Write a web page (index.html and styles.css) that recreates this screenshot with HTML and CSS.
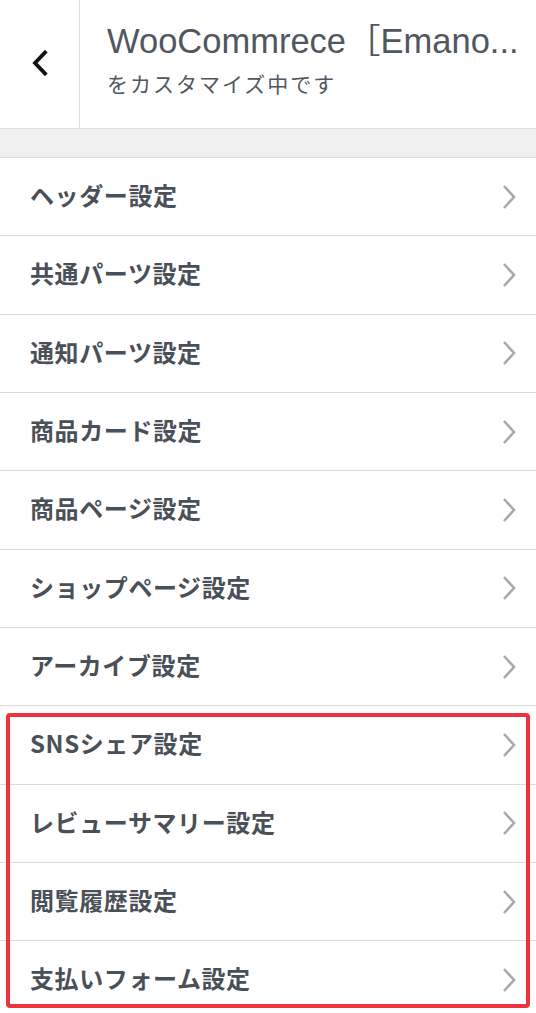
FILE: index.html
```html
<!DOCTYPE html>
<html lang="ja">
<head>
<meta charset="utf-8">
<title>Customizer</title>
<link rel="stylesheet" href="styles.css">
</head>
<body>
<div class="page">
  <header class="head">
    <div class="back">
      <svg width="18" height="26" viewBox="0 0 18 26"><path d="M14 2.5 L4 13 L14 23.5" fill="none" stroke="#111" stroke-width="3.8" stroke-linecap="square"/></svg>
    </div>
    <div class="titles">
      <div class="title">WooCommrece［Emano...</div>
      <div class="sub">をカスタマイズ中です</div>
    </div>
  </header>
  <div class="band"></div>
  <ul class="menu">
    <li class="row"><span>ヘッダー設定</span><svg class="chev" width="16" height="26" viewBox="0 0 16 26"><path d="M3 2 L13 13 L3 24" fill="none" stroke="#a7aaad" stroke-width="2.6"/></svg></li>
    <li class="row"><span>共通パーツ設定</span><svg class="chev" width="16" height="26" viewBox="0 0 16 26"><path d="M3 2 L13 13 L3 24" fill="none" stroke="#a7aaad" stroke-width="2.6"/></svg></li>
    <li class="row"><span>通知パーツ設定</span><svg class="chev" width="16" height="26" viewBox="0 0 16 26"><path d="M3 2 L13 13 L3 24" fill="none" stroke="#a7aaad" stroke-width="2.6"/></svg></li>
    <li class="row"><span>商品カード設定</span><svg class="chev" width="16" height="26" viewBox="0 0 16 26"><path d="M3 2 L13 13 L3 24" fill="none" stroke="#a7aaad" stroke-width="2.6"/></svg></li>
    <li class="row"><span>商品ページ設定</span><svg class="chev" width="16" height="26" viewBox="0 0 16 26"><path d="M3 2 L13 13 L3 24" fill="none" stroke="#a7aaad" stroke-width="2.6"/></svg></li>
    <li class="row"><span>ショップページ設定</span><svg class="chev" width="16" height="26" viewBox="0 0 16 26"><path d="M3 2 L13 13 L3 24" fill="none" stroke="#a7aaad" stroke-width="2.6"/></svg></li>
    <li class="row"><span>アーカイブ設定</span><svg class="chev" width="16" height="26" viewBox="0 0 16 26"><path d="M3 2 L13 13 L3 24" fill="none" stroke="#a7aaad" stroke-width="2.6"/></svg></li>
    <li class="row"><span>SNSシェア設定</span><svg class="chev" width="16" height="26" viewBox="0 0 16 26"><path d="M3 2 L13 13 L3 24" fill="none" stroke="#a7aaad" stroke-width="2.6"/></svg></li>
    <li class="row"><span>レビューサマリー設定</span><svg class="chev" width="16" height="26" viewBox="0 0 16 26"><path d="M3 2 L13 13 L3 24" fill="none" stroke="#a7aaad" stroke-width="2.6"/></svg></li>
    <li class="row"><span>閲覧履歴設定</span><svg class="chev" width="16" height="26" viewBox="0 0 16 26"><path d="M3 2 L13 13 L3 24" fill="none" stroke="#a7aaad" stroke-width="2.6"/></svg></li>
    <li class="row"><span>支払いフォーム設定</span><svg class="chev" width="16" height="26" viewBox="0 0 16 26"><path d="M3 2 L13 13 L3 24" fill="none" stroke="#a7aaad" stroke-width="2.6"/></svg></li>
  </ul>
  <div class="highlight"></div>
</div>
</body>
</html>
```

FILE: styles.css
```css
html, body {
  margin: 0;
  padding: 0;
  background: #ffffff;
}
.page {
  position: relative;
  width: 536px;
  height: 1013px;
  overflow: hidden;
  font-family: "Liberation Sans", "Noto Sans CJK JP", sans-serif;
}
.head {
  display: flex;
  height: 128px;
  border-bottom: 1px solid #dcdcde;
  background: #fff;
}
.back {
  width: 80px;
  flex: none;
  border-right: 1px solid #dcdcde;
  display: flex;
  align-items: center;
  justify-content: center;
  padding-bottom: 2px;
  box-sizing: border-box;
}
.titles {
  flex: 1;
  min-width: 0;
  padding: 21px 16px 0 27px;
  color: #50575e;
}
.title {
  font-size: 34.5px;
  line-height: 40px;
  white-space: nowrap;
  overflow: hidden;
}
.sub {
  margin-top: 7px;
  font-family: "Noto Sans CJK JP", sans-serif;
  font-size: 21px;
  line-height: 30px;
  letter-spacing: 2px;
}
.band {
  height: 28px;
  background: #f0f0f1;
}
.menu {
  list-style: none;
  margin: 0;
  padding: 0;
  border-top: 1px solid #dcdcde;
}
.row {
  display: flex;
  align-items: center;
  justify-content: space-between;
  height: 77.33px;
  box-sizing: content-box;
  border-bottom: 1px solid #dcdcde;
  padding: 0 19px 0 30px;
  font-family: "Noto Sans CJK JP", sans-serif;
  font-weight: 700;
  font-size: 24px;
  color: #4a5057;
  letter-spacing: 0.6px;
}
.row span {
  position: relative;
  top: -2px;
}
.chev {
  flex: none;
}
.highlight {
  position: absolute;
  left: 6px;
  top: 713px;
  width: 524px;
  height: 295px;
  box-sizing: border-box;
  border: 4px solid #ee3340;
  border-radius: 4px;
}
```
